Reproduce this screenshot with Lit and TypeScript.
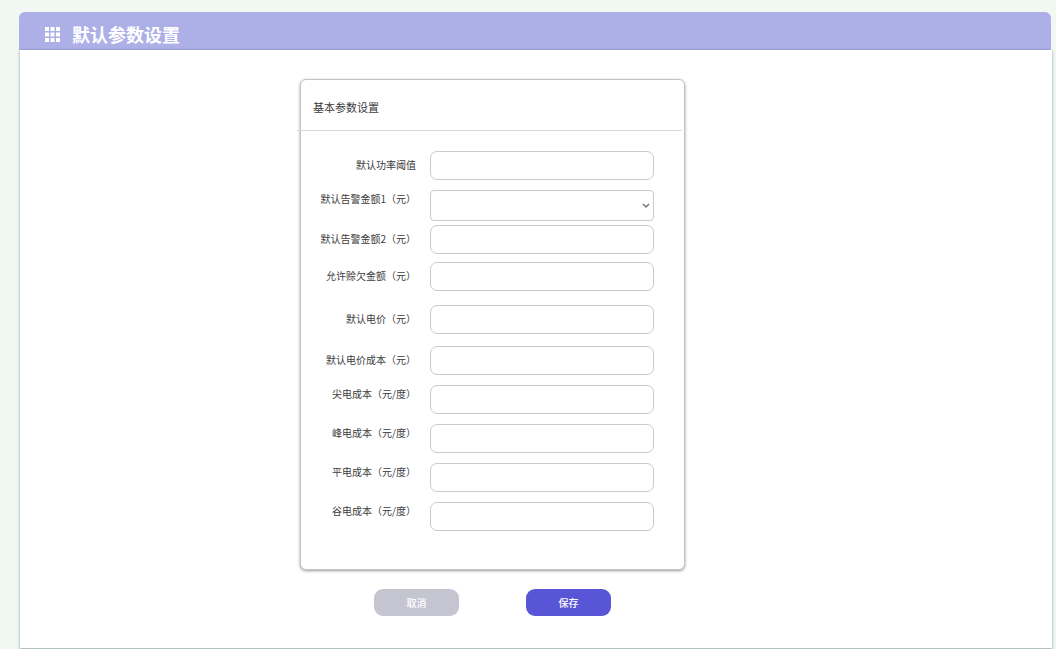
import { LitElement, html, css } from "lit";
import { customElement, state } from "lit/decorators.js";
import { classMap } from "lit/directives/class-map.js";

interface Field {
  id: string;
  label: string;
  kind?: "select";
  gap?: "tight" | "snug" | "wide" | "roomy";
  raised?: boolean;
}

const FIELDS: Field[] = [
  { id: "power", label: "默认功率阈值" },
  { id: "alarm1", label: "默认告警金额1（元）", kind: "select", gap: "tight", raised: true },
  { id: "alarm2", label: "默认告警金额2（元）", gap: "snug" },
  { id: "credit", label: "允许赊欠金额（元）", gap: "wide" },
  { id: "price", label: "默认电价（元）", gap: "roomy" },
  { id: "cost", label: "默认电价成本（元）" },
  { id: "sharp", label: "尖电成本（元/度）", raised: true },
  { id: "peak", label: "峰电成本（元/度）", raised: true },
  { id: "flat", label: "平电成本（元/度）", raised: true },
  { id: "valley", label: "谷电成本（元/度）", raised: true },
];

@customElement("app-root")
export class AppRoot extends LitElement {
  static styles = css`
    :host {
      display: flex;
      flex-direction: column;
      box-sizing: border-box;
      min-height: 100vh;
      padding: 12px 4px 1px 20px;
      background: #f1f8f4;
      color: #3c3c3c;
      font-family: "Noto Sans CJK SC", sans-serif;
      font-size: 10px;
    }
    * {
      box-sizing: border-box;
    }
    .bar {
      display: flex;
      align-items: center;
      gap: 12px;
      height: 38px;
      margin: 0 1px 0 -1px;
      padding: 7px 25px 0 26px;
      border-bottom: 1px solid #a3a6dc;
      border-radius: 6px 6px 0 0;
      background: #adafe7;
      color: #fff;
    }
    .grid-icon {
      width: 15px;
      height: 15px;
      fill: #fff;
    }
    .title {
      margin: 0;
      font-size: 18px;
      line-height: 26px;
      font-weight: 700;
    }
    .panel {
      flex: 1;
      display: grid;
      grid-template-columns: 280fr 385px 367fr;
      align-content: start;
      padding: 29px 0 32px;
      background: #fff;
      box-shadow: 0 1px 3px rgba(60, 90, 80, 0.55);
    }
    .form {
      grid-column: 2;
    }
    .card {
      padding-bottom: 28px;
      border: 1px solid #c4c4c4;
      border-radius: 6px;
      background: #fff;
      box-shadow: 0 1px 3px rgba(0, 0, 0, 0.4);
    }
    .card-title {
      margin: 0 2px 20px -4px;
      padding: 17px 16px 13px;
      border-bottom: 1px solid #d8d8d8;
      font-size: 11px;
      line-height: 20px;
      font-weight: 400;
    }
    .row {
      display: grid;
      grid-template-columns: 115px 224px;
      column-gap: 14px;
      align-items: center;
      margin-bottom: 10px;
    }
    .tight {
      margin-bottom: 4px;
    }
    .snug {
      margin-bottom: 8px;
    }
    .roomy {
      margin-bottom: 12px;
    }
    .wide {
      margin-bottom: 14px;
    }
    .label {
      padding-bottom: 2px;
      line-height: 18px;
      text-align: right;
      white-space: nowrap;
    }
    .raised .label {
      align-self: start;
    }
    .field {
      width: 100%;
      height: 29px;
      padding: 0 8px;
      border: 1px solid #cbcbcb;
      border-radius: 7px;
      background: #fff;
      color: inherit;
      font: inherit;
      outline: none;
    }
    .field:focus {
      border-color: #5856d6;
    }
    .picker {
      position: relative;
      display: flex;
    }
    .picker .field {
      height: 31px;
      border-radius: 4px;
      appearance: none;
    }
    .chevron {
      position: absolute;
      top: 13px;
      right: 4px;
      width: 8px;
      height: 6px;
      fill: none;
      stroke: #777;
      stroke-width: 1.5;
      pointer-events: none;
    }
    .actions {
      display: flex;
      justify-content: center;
      gap: 67px;
      margin-top: 19px;
    }
    .button {
      width: 85px;
      height: 27px;
      padding: 0;
      border: 0;
      border-radius: 9px;
      background: #c5c4d1;
      color: #fff;
      font: inherit;
      font-weight: 500;
      cursor: pointer;
    }
    .primary {
      background: #5856d6;
    }
  `;

  @state() private values: Record<string, string> = {};

  private setValue(id: string, e: Event) {
    this.values = { ...this.values, [id]: (e.target as HTMLInputElement).value };
  }

  private control(f: Field) {
    if (f.kind === "select") {
      return html`<div class="picker">
        <select class="field" id=${f.id} @change=${(e: Event) => this.setValue(f.id, e)}>
          <option value=""></option>
        </select>
        <svg class="chevron" viewBox="0 0 8 6" aria-hidden="true"><path d="M1 1 L4 4 L7 1" /></svg>
      </div>`;
    }
    return html`<input
      class="field"
      type="text"
      id=${f.id}
      .value=${this.values[f.id] ?? ""}
      @input=${(e: Event) => this.setValue(f.id, e)}
    />`;
  }

  private row(f: Field) {
    const classes = { row: true, raised: !!f.raised, [f.gap ?? "normal"]: true };
    return html`<div class=${classMap(classes)}>
      <label class="label" for=${f.id}>${f.label}</label>
      ${this.control(f)}
    </div>`;
  }

  render() {
    return html`
      <header class="bar">
        <svg class="grid-icon" viewBox="0 0 15 15" aria-hidden="true">
          <path
            d="M0 0h4v4H0zM5.5 0h4v4h-4zM11 0h4v4h-4zM0 5.5h4v4H0zM5.5 5.5h4v4h-4zM11 5.5h4v4h-4zM0 11h4v4H0zM5.5 11h4v4h-4zM11 11h4v4h-4z"
          />
        </svg>
        <h1 class="title">默认参数设置</h1>
      </header>
      <main class="panel">
        <form class="form" @submit=${(e: Event) => e.preventDefault()}>
          <section class="card">
            <h2 class="card-title">基本参数设置</h2>
            ${FIELDS.map((f) => this.row(f))}
          </section>
          <div class="actions">
            <button class="button" type="button" @click=${() => (this.values = {})}>取消</button>
            <button class="button primary" type="submit">保存</button>
          </div>
        </form>
      </main>
    `;
  }
}
